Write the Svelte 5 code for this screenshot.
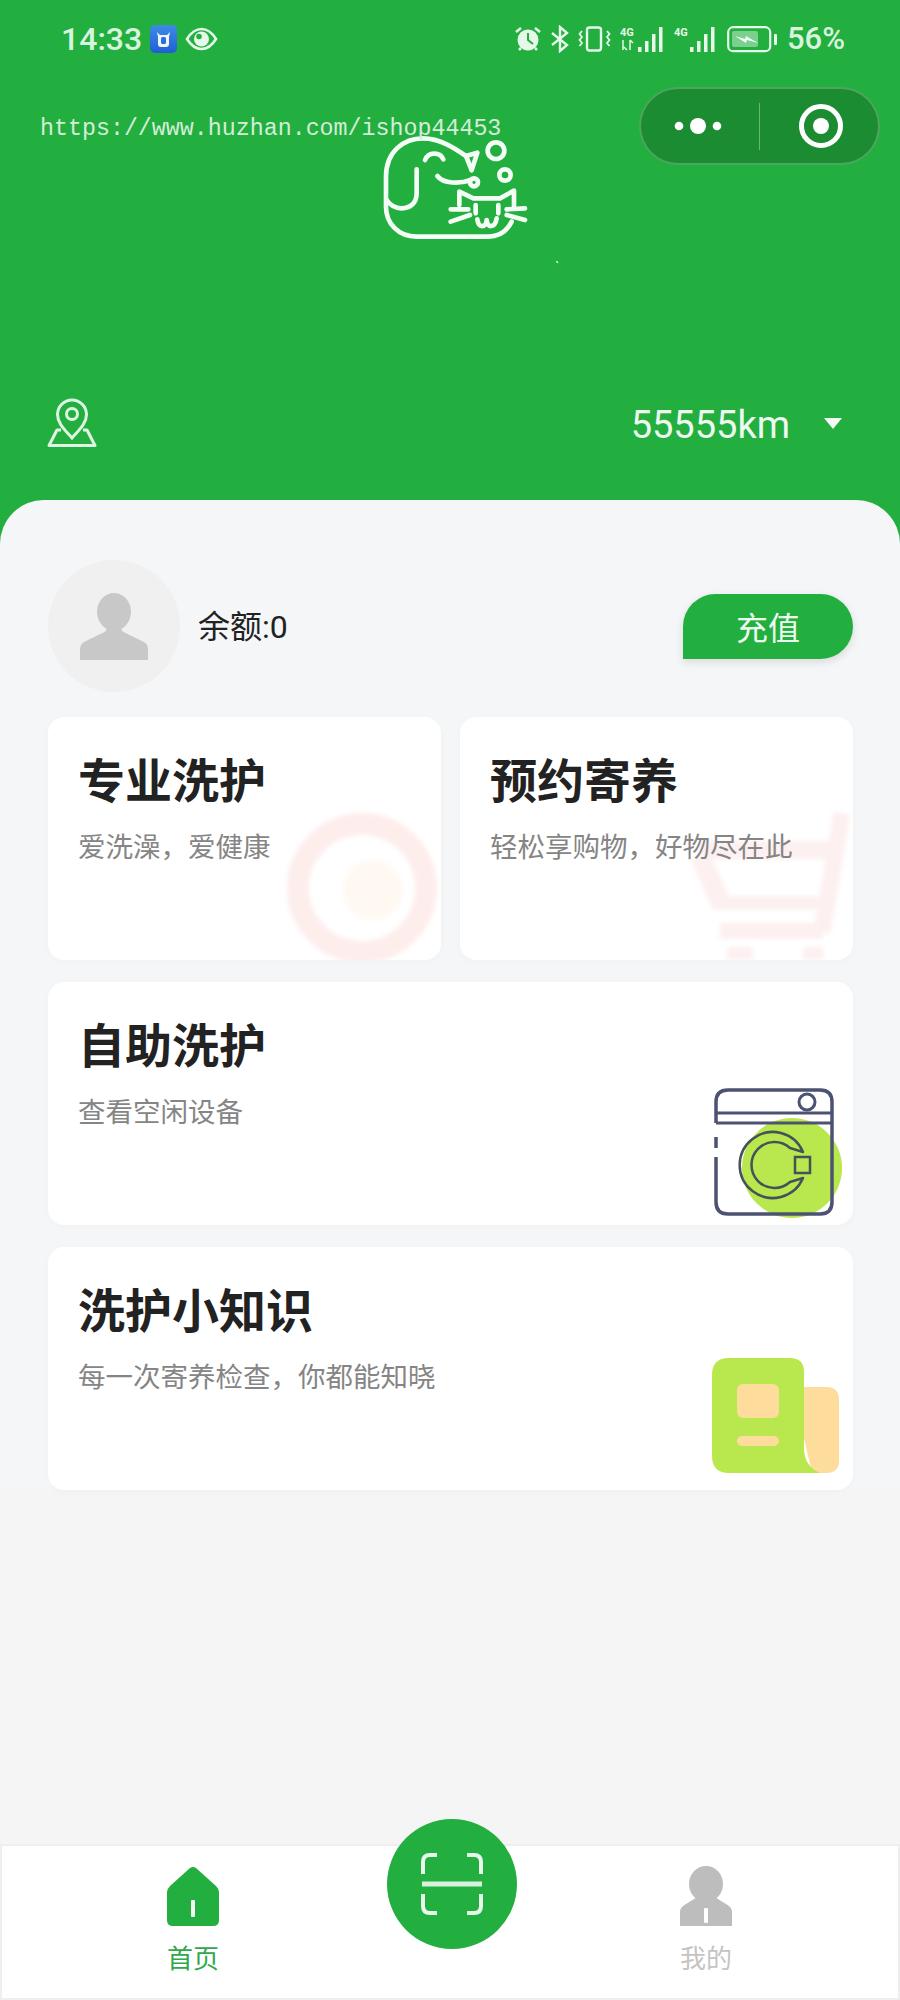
<script>
  const cards = [
    { title: '自助洗护', sub: '查看空闲设备', kind: 'washer' },
    { title: '洗护小知识', sub: '每一次寄养检查，你都能知晓', kind: 'paper' }
  ];
</script>

<div class="page">
  <header class="header">
    <div class="status">
      <div class="status-left">
        <span class="time">14:33</span>
        <svg class="ox" width="27" height="28" viewBox="0 0 27 28">
          <defs>
            <linearGradient id="oxg" x1="0" y1="0" x2="0" y2="1">
              <stop offset="0" stop-color="#3f8ae6" />
              <stop offset="1" stop-color="#1f5fd6" />
            </linearGradient>
          </defs>
          <rect width="27" height="28" rx="5" fill="url(#oxg)" />
          <path d="M7 7l3 3h7l3-3-1 5v7q0 3-3 3h-5q-3 0-3-3v-7z" fill="#eef5ff" />
          <rect x="11" y="12" width="5" height="7" rx="1.5" fill="#2a6fdc" />
        </svg>
        <svg width="33" height="24" viewBox="0 0 33 24">
          <path d="M2 12C7 4 12 2 16.500 2S26 4 31 12C26 20 21 22 16.500 22S7 20 2 12Z" fill="none" stroke="#e6f8ea" stroke-width="2.600" />
          <circle cx="16.500" cy="12" r="7.500" fill="#e6f8ea" />
          <circle cx="14" cy="9.500" r="2.800" fill="#22af3f" />
        </svg>
      </div>
      <div class="status-right">
        <svg width="28" height="28" viewBox="0 0 28 28">
          <circle cx="14" cy="15" r="10.500" fill="#e6f8ea" />
          <path d="M14 8v7l5 4" fill="none" stroke="#22af3f" stroke-width="2" />
          <path d="M2 7l5-4M26 7l-5-4M5 25l2-2M23 25l-2-2" stroke="#e6f8ea" stroke-width="2.500" fill="none" />
        </svg>
        <svg width="18" height="28" viewBox="0 0 18 28">
          <path d="M1 8l15 12-7 6V2l7 6L1 20" fill="none" stroke="#e6f8ea" stroke-width="2.400" />
        </svg>
        <svg width="33" height="26" viewBox="0 0 33 26">
          <rect x="9" y="1.500" width="14" height="23" rx="2.500" fill="none" stroke="#e6f8ea" stroke-width="2.400" />
          <path d="M4 5L1.500 8 4 11 1.500 14 4 17 1.500 20M29 5l2.500 3L29 11l2.500 3L29 17l2.500 3" fill="none" stroke="#e6f8ea" stroke-width="1.800" />
        </svg>
        <svg width="45" height="27" viewBox="0 0 45 27">
          <text x="0" y="10" class="net">4G</text>
          <path d="M3 14v10M7 24l-3-3M10 14v10M10 14l3 3" stroke="#e6f8ea" stroke-width="1.500" fill="none" />
          <rect x="18" y="21" width="3.500" height="5" fill="#e6f8ea" />
          <rect x="25" y="15" width="3.500" height="11" fill="#e6f8ea" />
          <rect x="32" y="8" width="3.500" height="18" fill="#e6f8ea" />
          <rect x="39" y="1" width="3.500" height="25" fill="#e6f8ea" />
        </svg>
        <svg width="44" height="27" viewBox="0 0 44 27">
          <text x="0" y="10" class="net">4G</text>
          <rect x="16" y="21" width="3.500" height="5" fill="#e6f8ea" />
          <rect x="23" y="15" width="3.500" height="11" fill="#e6f8ea" />
          <rect x="30" y="8" width="3.500" height="18" fill="#e6f8ea" />
          <rect x="37" y="1" width="3.500" height="25" fill="#e6f8ea" />
        </svg>
        <svg width="51" height="27" viewBox="0 0 51 27">
          <rect x="1.200" y="1.200" width="42" height="24" rx="5" fill="none" stroke="#e6f8ea" stroke-width="2.200" />
          <rect x="5" y="5" width="26" height="16" rx="2" fill="#e6f8ea" opacity="0.45" />
          <path d="M8 10l10 3 1-3 12 7-11-3-1 3z" fill="#f4fcf6" />
          <rect x="47" y="8" width="3" height="11" rx="1" fill="#e6f8ea" />
        </svg>
        <span class="pct">56%</span>
      </div>
    </div>

    <div class="hero">
      <div class="watermark">https://www.huzhan.com/ishop44453</div>
      <div class="capsule">
        <svg width="56" height="20" viewBox="0 0 56 20">
          <circle cx="8" cy="10" r="4.300" fill="#fff" />
          <circle cx="27" cy="10" r="8" fill="#fff" />
          <circle cx="46" cy="10" r="4.300" fill="#fff" />
        </svg>
        <i class="capsule-line"></i>
        <svg width="46" height="46" viewBox="0 0 46 46">
          <circle cx="23" cy="23" r="19.500" fill="none" stroke="#fff" stroke-width="5" />
          <circle cx="23" cy="23" r="8" fill="#fff" />
        </svg>
      </div>
      <svg class="logo" width="200" height="150" viewBox="0 0 600 450">
        <g fill="none" stroke="#f4fcf6" stroke-width="14" stroke-linecap="round" stroke-linejoin="round">
          <path d="M455 305C440 335 415 350 385 350H170C115 350 78 310 78 260V170C78 95 130 55 190 55C240 55 285 85 318 108L352 98L335 150" />
          <path d="M318 108L335 150" />
          <path d="M232 168C250 192 300 192 332 180" />
          <circle cx="342" cy="187" r="12" />
          <path d="M170 148V220C170 250 150 265 125 265C105 265 90 255 80 240" />
          <path d="M195 120C205 95 240 95 250 118" />
          <circle cx="408" cy="92" r="25" />
          <circle cx="435" cy="165" r="17" />
          <path d="M298 255V215L340 235H420L462 212V258" />
          <path d="M347 255V280M415 255V280" />
          <path d="M352 298C355 325 378 325 380 300C382 325 405 325 410 295" />
          <path d="M272 268H325M272 305L330 285M440 268L495 265M440 285L495 300" />
        </g>
        <path d="M589 424l5 4" stroke="#f4fcf6" stroke-width="4" />
      </svg>
    </div>

    <div class="location">
      <svg width="53" height="50" viewBox="0 0 53 50">
        <path d="M26 40C18 31 11.500 25 11.500 16.500A14.500 14.500 0 0 1 40.500 16.500C40.500 25 34 31 26 40Z" fill="none" stroke="#dff5e3" stroke-width="3" />
        <circle cx="26" cy="16" r="5.500" fill="none" stroke="#dff5e3" stroke-width="3" />
        <path d="M15 32H11L3 47.500H49L41 32H37" fill="none" stroke="#dff5e3" stroke-width="3" stroke-linejoin="round" />
      </svg>
      <div class="distance">
        <span>55555km</span>
        <i class="caret"></i>
      </div>
    </div>
  </header>

  <main class="panel">
    <section class="balance">
      <div class="avatar">
        <svg width="70" height="68" viewBox="0 0 70 72" preserveAspectRatio="none">
          <ellipse cx="35" cy="21" rx="17" ry="20" fill="#c8c8c8" />
          <path d="M1 72V60Q1 55 7 52L26 42Q29 38 29 32H41Q41 38 44 42L63 52Q69 55 69 60V72Z" fill="#c8c8c8" />
        </svg>
      </div>
      <span class="amount">余额:0</span>
      <button class="recharge">充值</button>
    </section>

    <section class="two">
      <article class="card">
        <svg class="mark" width="154" height="150" viewBox="0 0 154 150">
          <circle cx="77" cy="75" r="64" fill="none" stroke="#fdeeec" stroke-width="22" />
          <circle cx="88" cy="77" r="30" fill="#fff9f2" />
        </svg>
        <h2>专业洗护</h2>
        <p>爱洗澡，爱健康</p>
      </article>
      <article class="card">
        <svg class="mark cart" width="170" height="150" viewBox="0 0 170 150">
          <g fill="none" stroke="#fdf0f0">
            <path d="M152 3L132 122" stroke-width="17" />
            <path d="M10 40H148" stroke-width="18" />
            <path d="M10 45L30 92" stroke-width="20" />
            <path d="M22 93H142" stroke-width="13" />
            <path d="M30 121H133" stroke-width="16" />
          </g>
          <rect x="37" y="137" width="26" height="13" fill="#fdf0f0" />
          <rect x="113" y="137" width="20" height="13" fill="#fdf0f0" />
        </svg>
        <h2>预约寄养</h2>
        <p>轻松享购物，好物尽在此</p>
      </article>
    </section>

    {#each cards as c}
      <article class="card wide">
        <h2>{c.title}</h2>
        <p>{c.sub}</p>
        {#if c.kind === 'washer'}
          <svg class="icon washer" width="132" height="132" viewBox="0 0 132 132">
            <circle cx="78" cy="80" r="50" fill="#b9e84e" />
            <path d="M2 35V14Q2 2 14 2H106Q118 2 118 14V114Q118 126 106 126H14Q2 126 2 114V69M2 49V60" fill="none" stroke="#4c5272" stroke-width="3.500" />
            <path d="M2 25H118M2 35H118" stroke="#4c5272" stroke-width="3" />
            <circle cx="93" cy="14" r="8" fill="none" stroke="#4c5272" stroke-width="3" />
            <path d="M89 64A33 33 0 1 0 89 90L76 94A23 23 0 1 1 76 60Z" fill="none" stroke="#45525a" stroke-width="2.500" stroke-linejoin="round" />
            <rect x="81" y="69" width="15" height="16" fill="none" stroke="#45525a" stroke-width="2.500" />
          </svg>
        {:else}
          <svg class="icon paper" width="128" height="116" viewBox="0 0 128 116">
            <path d="M80 29H114Q127 29 127 42V103Q127 115 114 115H100Z" fill="#fddc9c" />
            <path d="M17 0H78Q92 0 92 14V90Q92 108 108 115H17Q0 115 0 98V17Q0 0 17 0Z" fill="#b9e84e" />
            <rect x="25" y="26" width="42" height="34" rx="6" fill="#fddc9c" />
            <rect x="25" y="78" width="42" height="10" rx="5" fill="#fddc9c" />
          </svg>
        {/if}
      </article>
    {/each}
  </main>

  <div class="rest"></div>

  <nav class="tabs">
    <div class="tab active">
      <svg width="52" height="60" viewBox="0 0 52 60">
        <path d="M3 20L23 2Q26 0 29 2L49 20Q52 23 52 26V54Q52 60 46 60H6Q0 60 0 54V26Q0 23 3 20Z" fill="#22af3f" />
        <rect x="24" y="34" width="4" height="17" rx="1" fill="#f2fbf4" />
      </svg>
      <span>首页</span>
    </div>
    <div class="tab">
      <svg width="52" height="60" viewBox="0 0 52 60">
        <ellipse cx="26" cy="18" rx="17" ry="18" fill="#bdbdbd" />
        <path d="M0 60V46Q0 41 6 38L19 30H33L46 38Q52 41 52 46V60Z" fill="#bdbdbd" />
        <rect x="24" y="42" width="4" height="15" rx="1" fill="#fff" />
      </svg>
      <span>我的</span>
    </div>
    <div class="scan">
      <svg width="62" height="62" viewBox="0 0 62 62">
        <path d="M16 2H9Q2 2 2 9V21M46 2H53Q60 2 60 9V21M16 60H9Q2 60 2 53V41M46 60H53Q60 60 60 53V41" fill="none" stroke="#e6f8ea" stroke-width="4" />
        <path d="M1 31H61" stroke="#d8f2de" stroke-width="5" />
      </svg>
    </div>
  </nav>
</div>

<style>
  :global(body) {
    margin: 0;
  }
  .page {
    width: 900px;
    min-height: 2000px;
    display: flex;
    flex-direction: column;
    background: #22af3f;
    font-family: Roboto, "Noto Sans CJK SC", sans-serif;
  }
  .header {
    height: 500px;
    display: flex;
    flex-direction: column;
    box-sizing: border-box;
  }
  .status {
    height: 87px;
    box-sizing: border-box;
    padding: 24px 55px 0 61px;
    display: flex;
    justify-content: space-between;
    align-items: flex-start;
    color: #d8f3de;
  }
  .status-left,
  .status-right {
    display: flex;
    align-items: center;
    height: 30px;
  }
  .status-left {
    gap: 8px;
  }
  .status-right {
    gap: 9px;
  }
  .time {
    font-size: 32px;
    font-weight: 500;
    line-height: 30px;
  }
  .pct {
    font-size: 31px;
    font-weight: 500;
    line-height: 30px;
  }
  .net {
    font-family: Roboto, sans-serif;
    font-size: 11px;
    font-weight: 700;
    fill: #e6f8ea;
  }
  .hero {
    height: 300px;
    display: grid;
    grid-template-columns: 1fr;
    grid-template-rows: 1fr;
  }
  .hero > * {
    grid-area: 1 / 1;
  }
  .watermark {
    justify-self: start;
    align-self: start;
    margin: 28px 0 0 40px;
    font-family: "Liberation Mono", monospace;
    font-size: 23.300px;
    line-height: 28px;
    color: #d4edd8;
    z-index: 1;
  }
  .capsule {
    justify-self: end;
    align-self: start;
    margin-right: 20px;
    width: 241px;
    height: 78px;
    box-sizing: border-box;
    display: flex;
    align-items: center;
    padding: 0 17px 0 30px;
    background: #1b8c31;
    border: 2px solid rgba(255, 255, 255, 0.22);
    border-radius: 39px;
  }
  .capsule-line {
    width: 1px;
    height: 47px;
    margin: 0 38px 0 32px;
    background: rgba(255, 255, 255, 0.35);
  }
  .logo {
    justify-self: start;
    align-self: start;
    margin: 33px 0 0 360px;
  }
  .location {
    display: flex;
    justify-content: space-between;
    align-items: center;
    padding: 9px 58px 0 46px;
  }
  .distance {
    display: flex;
    align-items: center;
    gap: 34px;
    color: #eefaf0;
    font-size: 38px;
    line-height: 50px;
  }
  .distance span {
    margin-top: 4px;
  }
  .caret {
    width: 0;
    height: 0;
    border-left: 9px solid transparent;
    border-right: 9px solid transparent;
    border-top: 11px solid #f4fcf6;
  }
  .panel {
    box-sizing: border-box;
    padding: 60px 47px 0 48px;
    background: #f4f6f8;
    border-radius: 44px 44px 0 0;
    display: flex;
    flex-direction: column;
    gap: 22px;
  }
  .rest {
    flex: 1;
    background: #f5f5f5;
  }
  .balance {
    height: 132px;
    display: flex;
    align-items: center;
    margin-bottom: 3px;
  }
  .avatar {
    width: 132px;
    height: 132px;
    border-radius: 50%;
    background: #f0f0f0;
    display: flex;
    justify-content: center;
    align-items: center;
  }
  .amount {
    margin: 0 0 4px 18px;
    font-size: 32px;
    color: #222;
  }
  .recharge {
    margin-left: auto;
    width: 170px;
    height: 65px;
    border: none;
    border-radius: 33px 33px 33px 0;
    background: #22af3f;
    color: #eefaf0;
    font-family: inherit;
    font-size: 32px;
    box-shadow: 0 3px 8px rgba(0, 0, 0, 0.12);
  }
  .two {
    display: grid;
    grid-template-columns: 393px 393px;
    gap: 19px;
  }
  .card {
    position: relative;
    height: 243px;
    box-sizing: border-box;
    padding: 35px 30px 0;
    background: #fff;
    border-radius: 16px;
    overflow: hidden;
    box-shadow: 0 2px 8px rgba(0, 0, 0, 0.025);
  }
  .card h2 {
    position: relative;
    margin: 0;
    font-size: 47px;
    line-height: 60px;
    font-weight: 700;
    color: #222;
  }
  .card p {
    position: relative;
    margin: 20px 0 0;
    font-size: 27.500px;
    line-height: 32px;
    color: #858585;
  }
  .mark {
    position: absolute;
    right: 2px;
    bottom: -3px;
    filter: blur(2px);
  }
  .cart {
    right: -7px;
    bottom: 0;
  }
  .icon {
    position: absolute;
  }
  .washer {
    left: 666px;
    top: 106px;
  }
  .paper {
    left: 664px;
    top: 111px;
  }
  .tabs {
    position: relative;
    height: 156px;
    box-sizing: border-box;
    padding: 0 162px 0 161px;
    display: flex;
    justify-content: space-between;
    background: #fff;
    border: 2px solid #eee;
  }
  .tab {
    width: 60px;
    display: flex;
    flex-direction: column;
    align-items: center;
    padding-top: 20px;
    gap: 15px;
    font-size: 26px;
    line-height: 36px;
    white-space: nowrap;
    color: #c4c4c4;
  }
  .tab.active {
    color: #2fa84a;
  }
  .scan {
    position: absolute;
    left: 385px;
    top: -27px;
    width: 130px;
    height: 130px;
    border-radius: 50%;
    background: #22af3f;
    display: flex;
    justify-content: center;
    align-items: center;
  }
</style>
